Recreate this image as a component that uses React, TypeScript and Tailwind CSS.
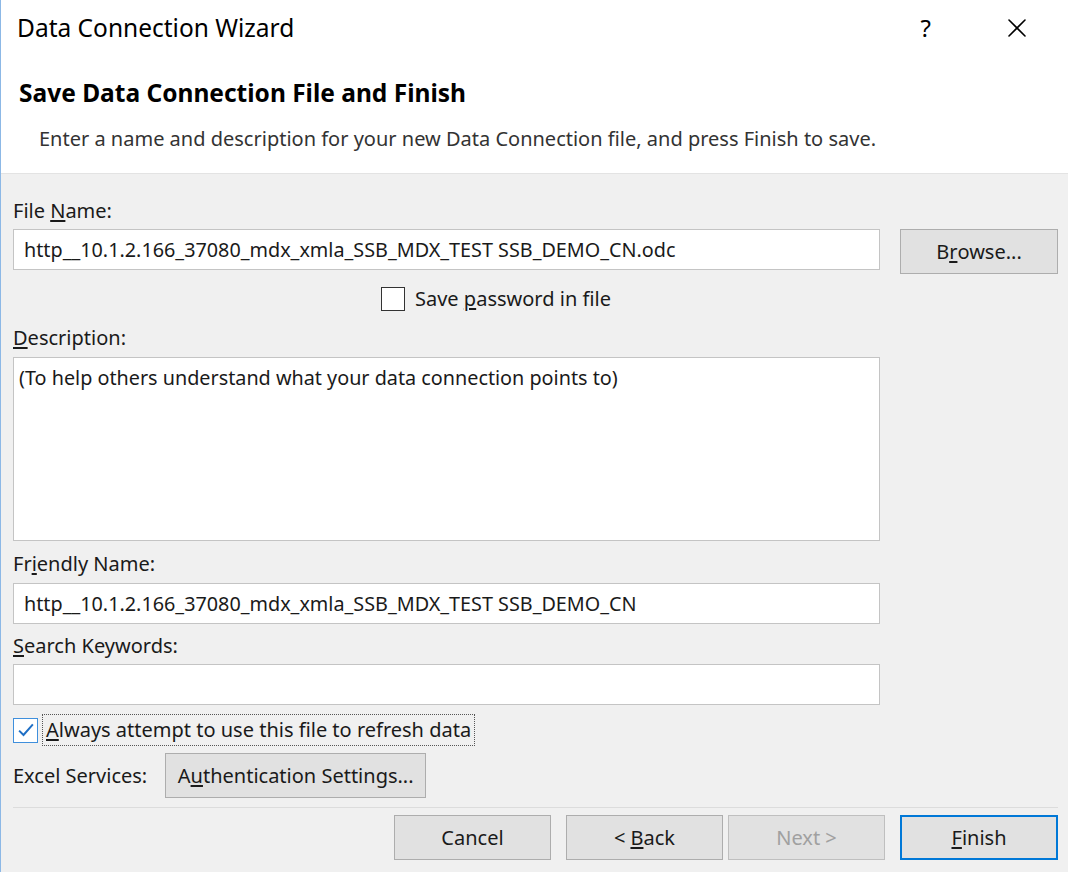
import { X } from 'lucide-react'

/**
 * Data Connection Wizard - final step dialog
 * Windows 10 style: white header band, grey form body, wizard buttons at the bottom.
 */

const font = { fontFamily: '"Noto Sans", "Open Sans", "Liberation Sans", sans-serif' }

function WinButton({
  children,
  className = '',
  disabled = false,
  primary = false,
}: {
  children: React.ReactNode
  className?: string
  disabled?: boolean
  primary?: boolean
}) {
  return (
    <button
      className={
        'flex h-[45px] items-center justify-center bg-[#e1e1e1] text-[20px] leading-6 ' +
        (primary
          ? 'border-2 border-[#0078d7] text-[#1a1a1a] '
          : disabled
            ? 'border border-[#bfbfbf] text-[#a0a0a0] '
            : 'border border-[#adadad] text-[#1a1a1a] ') +
        className
      }
    >
      {children}
    </button>
  )
}

function Field({ value, className = '' }: { value?: string; className?: string }) {
  return (
    <div
      className={
        'flex items-center border border-[#c4c4c4] bg-white px-[10px] text-[19.8px] leading-6 text-[#1a1a1a] ' +
        className
      }
    >
      {value}
    </div>
  )
}

function Label({ children, className = '' }: { children: React.ReactNode; className?: string }) {
  return <div className={'h-6 text-[20px] leading-6 text-[#1a1a1a] ' + className}>{children}</div>
}

export default function App() {
  const url = 'http__10.1.2.166_37080_mdx_xmla_SSB_MDX_TEST SSB_DEMO_CN'

  return (
    <div
      style={font}
      className="flex h-[872px] w-[1068px] flex-col overflow-hidden border-l border-[#8cb8e6] bg-[#f0f0f0]"
    >
      {/* Header band */}
      <div className="h-[174px] shrink-0 border-b border-[#e3e3e3] bg-white">
        {/* Title bar */}
        <div className="flex h-[55px] items-center pl-[16px] pr-[35px]">
          <span className="text-[24.5px] leading-8 text-black">Data Connection Wizard</span>
          <span className="ml-auto mr-[70px] text-[24px] leading-8 text-black">?</span>
          <X className="h-[32px] w-[32px] text-black" strokeWidth={1.2} />
        </div>

        <div className="mt-[22px] pl-[18px] text-[24.5px] font-bold leading-8 text-black">
          Save Data Connection File and Finish
        </div>
        <div className="mt-[16px] pl-[38px] text-[20px] leading-7 text-[#333]">
          Enter a name and description for your new Data Connection file, and press Finish to save.
        </div>
      </div>

      {/* Form body */}
      <div className="flex flex-col pl-[12px] pr-[10px] pt-[25px]">
        <Label>
          File <u className="underline-offset-2">N</u>ame:
        </Label>
        <div className="mt-[6px] flex items-start gap-[20px]">
          <Field value={url + '.odc'} className="h-[41px] w-[867px]" />
          <WinButton className="w-[158px]">
            B<u className="underline-offset-2">r</u>owse...
          </WinButton>
        </div>

        {/* Save password */}
        <div className="ml-[368px] mt-[13px] flex h-6 items-center gap-[10px]">
          <div className="h-[24px] w-[24px] border border-[#333] bg-white" />
          <span className="text-[20px] leading-6 text-[#1a1a1a]">
            Save <u className="underline-offset-2">p</u>assword in file
          </span>
        </div>

        <Label className="mt-[15px]">
          <u className="underline-offset-2">D</u>escription:
        </Label>
        <div className="mt-[7px] h-[184px] w-[867px] border border-[#c4c4c4] bg-white px-[5px] pt-[8px] text-[19.8px] leading-6 text-[#1a1a1a]">
          (To help others understand what your data connection points to)
        </div>

        <Label className="mt-[11px]">
          Fr<u className="underline-offset-2">i</u>endly Name:
        </Label>
        <Field value={url} className="mt-[7px] h-[41px] w-[867px]" />

        <Label className="mt-[10px]">
          <u className="underline-offset-2">S</u>earch Keywords:
        </Label>
        <Field className="mt-[6px] h-[41px] w-[867px]" />

        {/* Always attempt */}
        <div className="mt-[9px] flex h-[32px] items-center gap-[4px]">
          <div className="flex h-[25px] w-[25px] items-center justify-center border border-[#3f8fdc] bg-white">
            <svg viewBox="0 0 16 16" className="h-[20px] w-[20px]" fill="none">
              <path d="M2.5 8.5 L6 12 L13.5 3.5" stroke="#1f6fc5" strokeWidth="1.6" />
            </svg>
          </div>
          <span className="h-[32px] border border-dotted border-[#555] px-[3px] text-[20px] leading-[30px] text-[#1a1a1a]">
            <u className="underline-offset-2">A</u>lways attempt to use this file to refresh data
          </span>
        </div>

        {/* Excel services */}
        <div className="mt-[7px] flex items-center gap-[18px]">
          <span className="text-[20px] leading-6 text-[#1a1a1a]">Excel Services:</span>
          <WinButton className="w-[261px]">
            A<u className="underline-offset-2">u</u>thentication Settings...
          </WinButton>
        </div>

        <div className="mt-[9px] h-px w-[1045px] bg-[#dcdcdc]" />

        {/* Wizard buttons */}
        <div className="mt-[7px] flex justify-end">
          <WinButton className="mr-[15px] w-[157px]">Cancel</WinButton>
          <WinButton className="w-[157px]">
            &lt; <u className="ml-[5px] underline-offset-2">B</u>ack
          </WinButton>
          <WinButton disabled className="ml-[5px] w-[157px]">
            Next &gt;
          </WinButton>
          <WinButton primary className="ml-[15px] w-[158px]">
            <u className="underline-offset-2">F</u>inish
          </WinButton>
        </div>
      </div>
    </div>
  )
}
